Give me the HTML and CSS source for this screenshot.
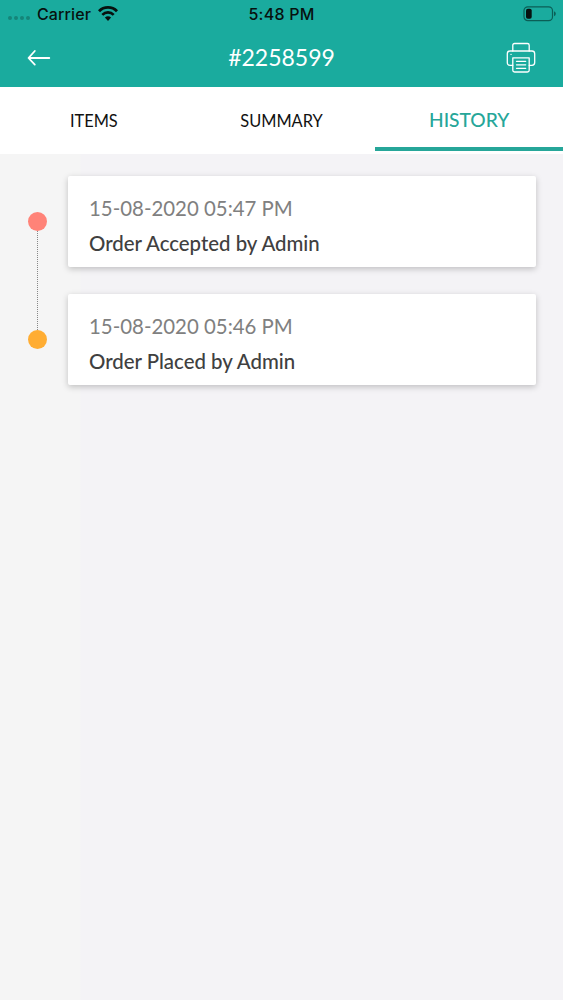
FILE: index.html
```
<!DOCTYPE html>
<html lang="en">
<head>
    <meta charset="UTF-8">
    <meta name="viewport" content="width=device-width, initial-scale=1.0">
    <title>Order #2258599</title>
    <link rel="stylesheet" href="styles.css">
</head>
<body>
    <header class="header">
        <div class="status-bar">
            <div class="carrier">
                <span class="signal"><i></i><i></i><i></i><i></i></span>
                <span class="carrier-name">Carrier</span>
                <svg class="wifi" width="20" height="15" viewBox="0 0 20 15">
                    <path d="M1 5.2 A12.6 12.6 0 0 1 19 5.2" fill="none" stroke="#07110f" stroke-width="2.8"/>
                    <path d="M4.3 8.8 A8 8 0 0 1 15.7 8.8" fill="none" stroke="#07110f" stroke-width="2.6"/>
                    <path d="M10 14.9 L6.9 11.6 A4.5 4.5 0 0 1 13.1 11.6 Z" fill="#07110f"/>
                </svg>
            </div>
            <span class="clock">5:48 PM</span>
            <svg class="battery" width="34" height="16" viewBox="0 0 34 16">
                <rect x="1" y="0.8" width="28.5" height="13.8" rx="3.8" fill="none" stroke="#0b5e56" stroke-width="1.2"/>
                <rect x="3" y="2.7" width="5.7" height="10" rx="1.8" fill="#07110f"/>
                <path d="M31 5.3 Q32.8 6 32.8 7.8 Q32.8 9.6 31 10.2 Z" fill="#0b5e56"/>
            </svg>
        </div>
        <div class="title-bar">
            <svg class="back" width="24" height="18" viewBox="0 0 24 18">
                <path d="M22.3 9 H1.7 M7.8 2 L1.5 9 L7.8 15.6" fill="none" stroke="#fff" stroke-width="1.8" stroke-linecap="round" stroke-linejoin="round"/>
            </svg>
            <h1>#2258599</h1>
            <svg class="print" width="30" height="32" viewBox="0 0 30 32" fill="none" stroke="#fff" stroke-width="1.3" stroke-linecap="round" stroke-linejoin="round">
                <path d="M6.8 9 V3.3 Q6.8 1.5 8.6 1.5 H21.4 Q23.2 1.5 23.2 3.3 V9"/>
                <path d="M6.8 23.3 H4 Q1.3 23.3 1.3 20.6 V11.7 Q1.3 9 4 9 H26 Q28.7 9 28.7 11.7 V20.6 Q28.7 23.3 26 23.3 H23.2"/>
                <path d="M6.8 15.8 H23.2 V28.2 Q23.2 30 21.4 30 H8.6 Q6.8 30 6.8 28.2 Z"/>
                <path d="M10.5 19.3 H19.7 M10.5 22.8 H19.7 M10.5 26.3 H19.7"/>
                <path d="M5 12.4 H5.1"/>
            </svg>
        </div>
    </header>

    <nav class="tabs">
        <a class="tab">ITEMS</a>
        <a class="tab">SUMMARY</a>
        <a class="tab active">HISTORY</a>
    </nav>

    <main class="history">
        <div class="entry">
            <div class="marker accepted"></div>
            <div class="card">
                <p class="date">15-08-2020 05:47 PM</p>
                <p class="event">Order Accepted by Admin</p>
            </div>
        </div>
        <div class="entry">
            <div class="marker placed"></div>
            <div class="card">
                <p class="date">15-08-2020 05:46 PM</p>
                <p class="event">Order Placed by Admin</p>
            </div>
        </div>
    </main>
</body>
</html>
```
FILE: styles.css
```
* {
    box-sizing: border-box;
}
body {
    margin: 0;
    min-height: 100vh;
    font-family: Lato, sans-serif;
    background: linear-gradient(to right, #f5f5f5 80px, #f4f3f6 81px);
}
.header {
    height: 87px;
    background: #1aab9e;
}
.status-bar {
    display: grid;
    grid-template-columns: 1fr auto 1fr;
    align-items: center;
    height: 27px;
    padding: 0 6px;
    font-family: Inter, sans-serif;
    font-size: 16px;
    font-weight: 500;
    color: #07110f;
}
.carrier {
    display: flex;
    align-items: center;
    padding-left: 2px;
    letter-spacing: 0.1px;
}
.clock {
    letter-spacing: 0.25px;
}
.signal {
    display: flex;
    gap: 2px;
    width: 24px;
    margin-right: 5px;
    padding-top: 9px;
}
.signal i {
    width: 4px;
    height: 4px;
    border-radius: 50%;
    background: #158579;
}
.wifi {
    margin-left: 7px;
}
.battery {
    justify-self: end;
}
.title-bar {
    display: grid;
    grid-template-columns: 1fr auto 1fr;
    align-items: center;
    height: 61px;
    padding: 0 27px;
}
.title-bar h1 {
    margin: 0 0 1px;
    font-size: 23px;
    font-weight: 400;
    color: #fff;
}
.print {
    justify-self: end;
}
.tabs {
    display: flex;
    height: 67px;
    padding-bottom: 3px;
    background: #fff;
}
.tab {
    flex: 1;
    padding-top: 2px;
    border-bottom: 4px solid transparent;
    font-size: 16.4px;
    line-height: 63px;
    text-align: center;
    color: #111;
}
.tab.active {
    border-color: #26a699;
    font-size: 19.2px;
    font-weight: 500;
    line-height: 62px;
    color: #26a699;
}
.history {
    display: flex;
    flex-direction: column;
    gap: 27px;
    padding: 22px 27px 0 28px;
}
.entry {
    display: flex;
    gap: 21px;
}
.marker {
    position: relative;
    width: 19px;
    height: 19px;
    margin-top: 36px;
    border-radius: 50%;
}
.marker.accepted {
    background: #ff8378;
}
.marker.placed {
    background: #ffad33;
}
/* dotted line down to the next marker */
.marker.accepted::after {
    content: "";
    position: absolute;
    top: 19px;
    left: 9px;
    height: 99px;
    border-left: 1px dotted #888;
}
.card {
    flex: 1;
    height: 91px;
    padding: 18px 21px 0;
    border-radius: 2px;
    background: #fff;
    box-shadow: 0 2px 6px rgba(0, 0, 0, 0.22);
}
.card p {
    margin: 0;
    font-size: 20.4px;
    line-height: 28px;
}
.card .date {
    color: #808080;
}
.card .event {
    margin-top: 7px;
    font-weight: 500;
    color: #404040;
}
```
